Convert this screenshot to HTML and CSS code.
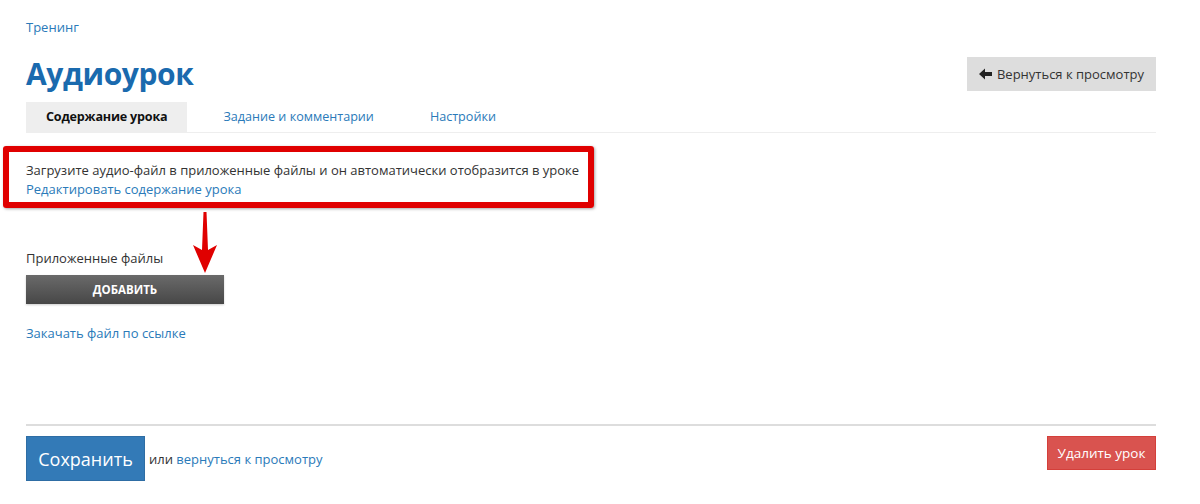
FILE: index.html
```html
<!DOCTYPE html>
<html lang="ru">
<head>
    <meta charset="UTF-8">
    <title>Аудиоурок</title>
    <link rel="stylesheet" href="styles.css">
</head>
<body>
    <div class="page">
        <div class="breadcrumb"><a href="#">Тренинг</a></div>

        <div class="header">
            <h1>Аудиоурок</h1>
            <a class="back-btn" href="#">
                <svg width="13" height="12" viewBox="0 0 13 12"><path d="M0 6 L6 0.5 L6 4 L13 4 L13 8 L6 8 L6 11.5 Z" fill="#222"/></svg>
                Вернуться к просмотру
            </a>
        </div>

        <ul class="tabs">
            <li class="active">Содержание урока</li>
            <li><a href="#">Задание и комментарии</a></li>
            <li><a href="#">Настройки</a></li>
        </ul>

        <div class="content">
            <!-- пометка на скриншоте -->
            <div class="mark-box"></div>
            <svg class="mark-arrow" width="30" height="62" viewBox="0 0 30 62">
                <path d="M13.5 0 L16.5 0 L18 38 L27 33 L15 61 L3 33 L12 38 Z" fill="#e00000"/>
            </svg>

            <p class="hint">Загрузите аудио-файл в приложенные файлы и он автоматически отобразится в уроке</p>
            <a href="#">Редактировать содержание урока</a>

            <div class="files">
                <div class="files-label">Приложенные файлы</div>
                <button class="add-btn">Добавить</button>
            </div>

            <a class="url-link" href="#">Закачать файл по ссылке</a>
        </div>

        <div class="footer">
            <div class="footer-left">
                <button class="save-btn">Сохранить</button>
                <span class="or">или <a href="#">вернуться к просмотру</a></span>
            </div>
            <button class="delete-btn">Удалить урок</button>
        </div>
    </div>
</body>
</html>
```

FILE: styles.css
```css
body {
    margin: 0;
    background: #fff;
    font-family: 'Open Sans', 'Liberation Sans', sans-serif;
    font-size: 13px;
    color: #333;
}

a {
    color: #2a7ab9;
    text-decoration: none;
}

.page {
    margin: 0 44px 0 26px;
    padding-top: 17px;
}

.breadcrumb {
    line-height: 20px;
}

.header {
    display: flex;
    justify-content: space-between;
    align-items: center;
    margin-top: 20px;
}

h1 {
    margin: 0;
    font-size: 30px;
    font-weight: 700;
    color: #1a6aae;
    line-height: 34px;
    letter-spacing: -0.4px;
}

.back-btn {
    display: flex;
    align-items: center;
    justify-content: center;
    gap: 5px;
    height: 34px;
    width: 189px;
    background: #ddd;
    color: #333;
    font-size: 13px;
    white-space: nowrap;
}

.tabs {
    display: flex;
    list-style: none;
    margin: 11px 0 0;
    padding: 0;
    border-bottom: 1px solid #eee;
    font-size: 12.6px;
}

.tabs li {
    padding: 0 20px;
    margin-right: 16px;
    line-height: 30px;
}

.tabs li.active {
    background: #eee;
    font-weight: 700;
    color: #111;
    letter-spacing: -0.2px;
}

.content {
    position: relative;
    padding-top: 28px;
    line-height: 19px;
    padding-bottom: 81px;
}

.hint {
    margin: 0;
}

.mark-box {
    position: absolute;
    left: -23px;
    top: 13px;
    width: 591px;
    height: 62px;
    box-sizing: border-box;
    border: 6px solid #e00000;
    border-radius: 3px;
    box-shadow: 1px 1px 3px rgba(0, 0, 0, 0.35);
    pointer-events: none;
}

.mark-arrow {
    position: absolute;
    left: 164px;
    top: 79px;
}

.files {
    margin-top: 49px;
}

.files-label {
    line-height: 20px;
    margin-bottom: 7px;
}

.add-btn {
    display: block;
    width: 198px;
    height: 29px;
    border: none;
    background: linear-gradient(#6a6a6a, #474747);
    color: #fff;
    font-family: inherit;
    font-size: 11.5px;
    font-weight: 700;
    text-transform: uppercase;
    box-shadow: 0 1px 2px rgba(0, 0, 0, 0.2);
}

.url-link {
    display: inline-block;
    margin-top: 20px;
}

.footer {
    display: flex;
    justify-content: space-between;
    align-items: flex-start;
    border-top: 2px solid #ddd;
    padding-top: 10px;
}

.footer-left {
    display: flex;
    align-items: center;
    gap: 4px;
}

.save-btn {
    width: 119px;
    height: 45px;
    border: 1px solid #2e6da4;
    background: #337ab7;
    color: #fff;
    font-family: inherit;
    font-size: 18px;
}

.or {
    font-size: 13px;
}

.delete-btn {
    width: 109px;
    height: 34px;
    border: 1px solid #d43f3a;
    background: #d9534f;
    color: #fff;
    font-family: inherit;
    font-size: 13.5px;
}
```
